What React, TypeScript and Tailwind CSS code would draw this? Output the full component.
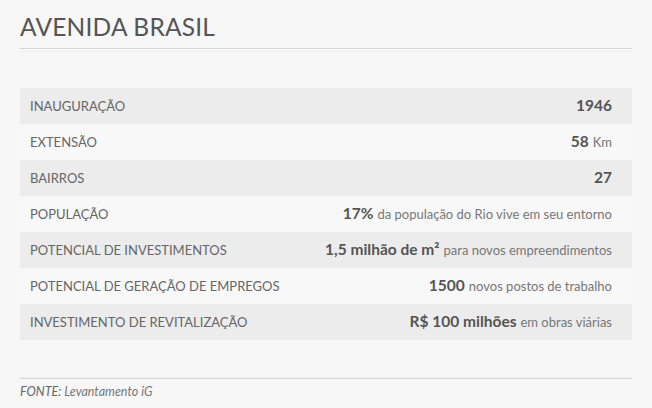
import React from "react";

const rows: { label: string; bold: string; rest?: string }[] = [
  { label: "INAUGURAÇÃO", bold: "1946" },
  { label: "EXTENSÃO", bold: "58", rest: "Km" },
  { label: "BAIRROS", bold: "27" },
  { label: "POPULAÇÃO", bold: "17%", rest: "da população do Rio vive em seu entorno" },
  { label: "POTENCIAL DE INVESTIMENTOS", bold: "1,5 milhão de m²", rest: "para novos empreendimentos" },
  { label: "POTENCIAL DE GERAÇÃO DE EMPREGOS", bold: "1500", rest: "novos postos de trabalho" },
  { label: "INVESTIMENTO DE REVITALIZAÇÃO", bold: "R$ 100 milhões", rest: "em obras viárias" },
];

export default function App() {
  return (
    <div
      className="w-[652px] h-[408px] bg-[#f7f7f7] px-[20px] pt-[12px] text-[#5a5a5a]"
      style={{ fontFamily: "Lato, 'Open Sans', sans-serif" }}
    >
      <h1 className="text-[24.5px] leading-[30px] font-normal text-[#555] tracking-[0.2px]">AVENIDA BRASIL</h1>
      <div className="mt-[6px] border-t border-[#d6d6d6]" />
      <div className="mt-[2px] border-t border-[#eeeeee]" />
      <div className="mt-[36px] flex flex-col">
        {rows.map((r, i) => (
          <div
            key={r.label}
            className={`h-[36px] flex items-center justify-between pl-[10px] pr-[20px] ${
              i % 2 === 0 ? "bg-[#ececec]" : "bg-[#f8f8f8]"
            }`}
          >
            <span className="text-[13px] text-[#666] pt-[1px]">{r.label}</span>
            <span className="flex items-baseline">
              <span className="text-[15.5px] font-bold text-[#555]">{r.bold}</span>
              {r.rest && <span className="ml-[4px] text-[13px] text-[#777]">{r.rest}</span>}
            </span>
          </div>
        ))}
      </div>
      <div className="mt-[37px] border-t border-[#eeeeee]" />
      <div className="border-t border-[#d6d6d6]" />
      <div className="mt-[4px] text-[12.5px] italic text-[#777]">
        <span className="text-[#666]">FONTE:</span> Levantamento iG
      </div>
    </div>
  );
}
